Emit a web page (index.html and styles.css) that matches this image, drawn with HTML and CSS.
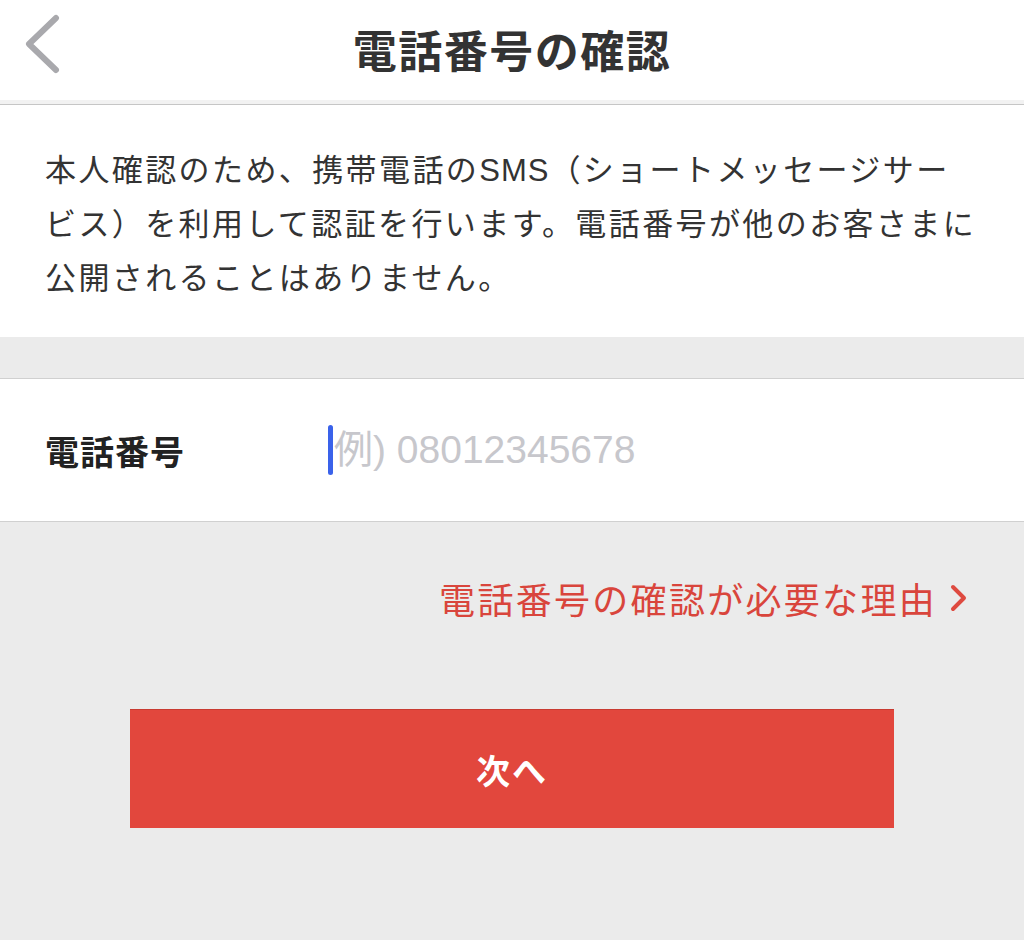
FILE: index.html
```html
<!DOCTYPE html>
<html lang="ja">
<head>
  <meta charset="UTF-8" />
  <meta name="viewport" content="width=device-width, initial-scale=1.0"/>
  <title>電話番号の確認</title>
  <link rel="stylesheet" href="styles.css">
</head>
<body>

  <div class="header">
    <button class="back-btn" aria-label="戻る">
      <svg width="36" height="60" viewBox="0 0 36 60">
        <polyline points="31,4 4,30 31,56" fill="none" stroke="#a9a9ad" stroke-width="6" stroke-linecap="round" stroke-linejoin="round"/>
      </svg>
    </button>
    <h1>電話番号の確認</h1>
    <div></div>
  </div>

  <p class="intro">本人確認のため、携帯電話の<span class="latin">SMS</span>（ショートメッセージサー<br>ビス）を利用して認証を行います。電話番号が他のお客さまに<br>公開されることはありません。</p>

  <div class="spacer"></div>

  <form id="phoneForm">
    <div class="field-row">
      <label for="phone">電話番号</label>
      <span class="caret"></span>
      <input type="tel" id="phone" name="phone" placeholder="例) 08012345678" />
    </div>

    <a class="reason-link" href="#">
      電話番号の確認が必要な理由
      <svg width="20" height="28" viewBox="0 0 20 28">
        <polyline points="4,3 15,14 4,25" fill="none" stroke="#de4a40" stroke-width="4" stroke-linecap="round" stroke-linejoin="round"/>
      </svg>
    </a>

    <button type="submit" class="next-btn">次へ</button>
  </form>

</body>
</html>
```

FILE: styles.css
```css
body {
  font-family: "Noto Sans CJK JP", "Liberation Sans", sans-serif;
  background: #ebebeb;
  color: #333;
  margin: 0;
  padding: 0;
}

.header {
  background: #fff;
  height: 104px;
  display: grid;
  grid-template-columns: 1fr auto 1fr;
  align-items: center;
  border-bottom: 1px solid #c6c6c6;
  box-shadow: inset 0 -4px 0 #f2f2f2;
}

.header h1 {
  margin: 0 0 7px;
  font-size: 44px;
  font-weight: bold;
  letter-spacing: 1.5px;
  color: #333;
}

.back-btn {
  justify-self: start;
  align-self: start;
  margin: 14px 0 0 25px;
  padding: 0;
  background: transparent;
  border: none;
  cursor: pointer;
  display: flex;
}

.intro {
  margin: 0;
  background: #fff;
  padding: 36px 20px 34px 45px;
  font-size: 31px;
  line-height: 54px;
  letter-spacing: 2.4px;
  color: #333;
  white-space: nowrap;
}

.intro .latin {
  font-family: "Liberation Sans", sans-serif;
  letter-spacing: 1px;
  line-height: 1;
}

.spacer {
  height: 41px;
}

.field-row {
  background: #fff;
  height: 142px;
  display: flex;
  align-items: center;
  padding-left: 45px;
  border-top: 1px solid #d0d0d0;
  border-bottom: 1px solid #d0d0d0;
}

.field-row label {
  width: 283px;
  font-size: 34px;
  font-weight: bold;
  letter-spacing: 1px;
  color: #222;
}

.caret {
  width: 5px;
  height: 50px;
  border-radius: 3px;
  background: #3a62ea;
}

.field-row input {
  flex: 1;
  border: none;
  outline: none;
  padding: 0 0 0 1px;
  font-family: "Liberation Sans", "Noto Sans CJK JP", sans-serif;
  font-size: 39px;
  color: #333;
  background: transparent;
}

.field-row input::placeholder {
  color: #c7c7cc;
}

.reason-link {
  display: flex;
  justify-content: flex-end;
  align-items: center;
  gap: 12px;
  margin-top: 51px;
  padding-right: 55px;
  line-height: 50px;
  font-size: 36px;
  letter-spacing: 2.3px;
  color: #d9453c;
  text-decoration: none;
}

.next-btn {
  display: block;
  width: 764px;
  height: 119px;
  margin: 86px auto 0;
  background: #e2473d;
  border: none;
  border-top: 1px solid #c83a31;
  color: #fff;
  font-family: "Noto Sans CJK JP", sans-serif;
  font-size: 34px;
  font-weight: bold;
  letter-spacing: 2px;
  cursor: pointer;
}
```
